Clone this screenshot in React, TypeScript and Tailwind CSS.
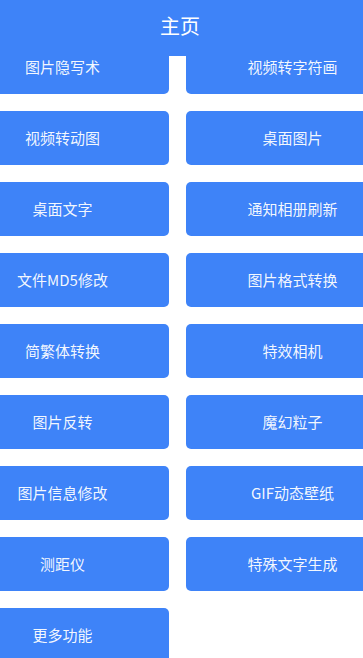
import React from "react";

const items = [
  "图片隐写术",
  "视频转字符画",
  "视频转动图",
  "桌面图片",
  "桌面文字",
  "通知相册刷新",
  "文件MD5修改",
  "图片格式转换",
  "简繁体转换",
  "特效相机",
  "图片反转",
  "魔幻粒子",
  "图片信息修改",
  "GIF动态壁纸",
  "测距仪",
  "特殊文字生成",
  "更多功能",
];

const font = {
  fontFamily: '"PingFang SC", "Noto Sans CJK SC", "Noto Sans", sans-serif',
};

export default function App() {
  return (
    <div className="relative w-[363px] h-[658px] overflow-hidden bg-white" style={font}>
      {/* header sits over the first row */}
      <div className="absolute left-0 top-0 z-10 w-full h-14 bg-[#3e83f8] flex items-center justify-center">
        <span className="text-white text-[20px] leading-none -mt-[5px] -ml-[3px]">主页</span>
      </div>

      <div className="pt-10 -ml-[44px] w-[443px] grid grid-cols-2 gap-x-[17px] gap-y-[17px]">
        {items.map((label) => (
          <button
            key={label}
            className="h-[54px] rounded-[5px] bg-[#3e83f8] text-[15px] text-white/95 flex items-center justify-center"
          >
            {label}
          </button>
        ))}
      </div>
    </div>
  );
}
